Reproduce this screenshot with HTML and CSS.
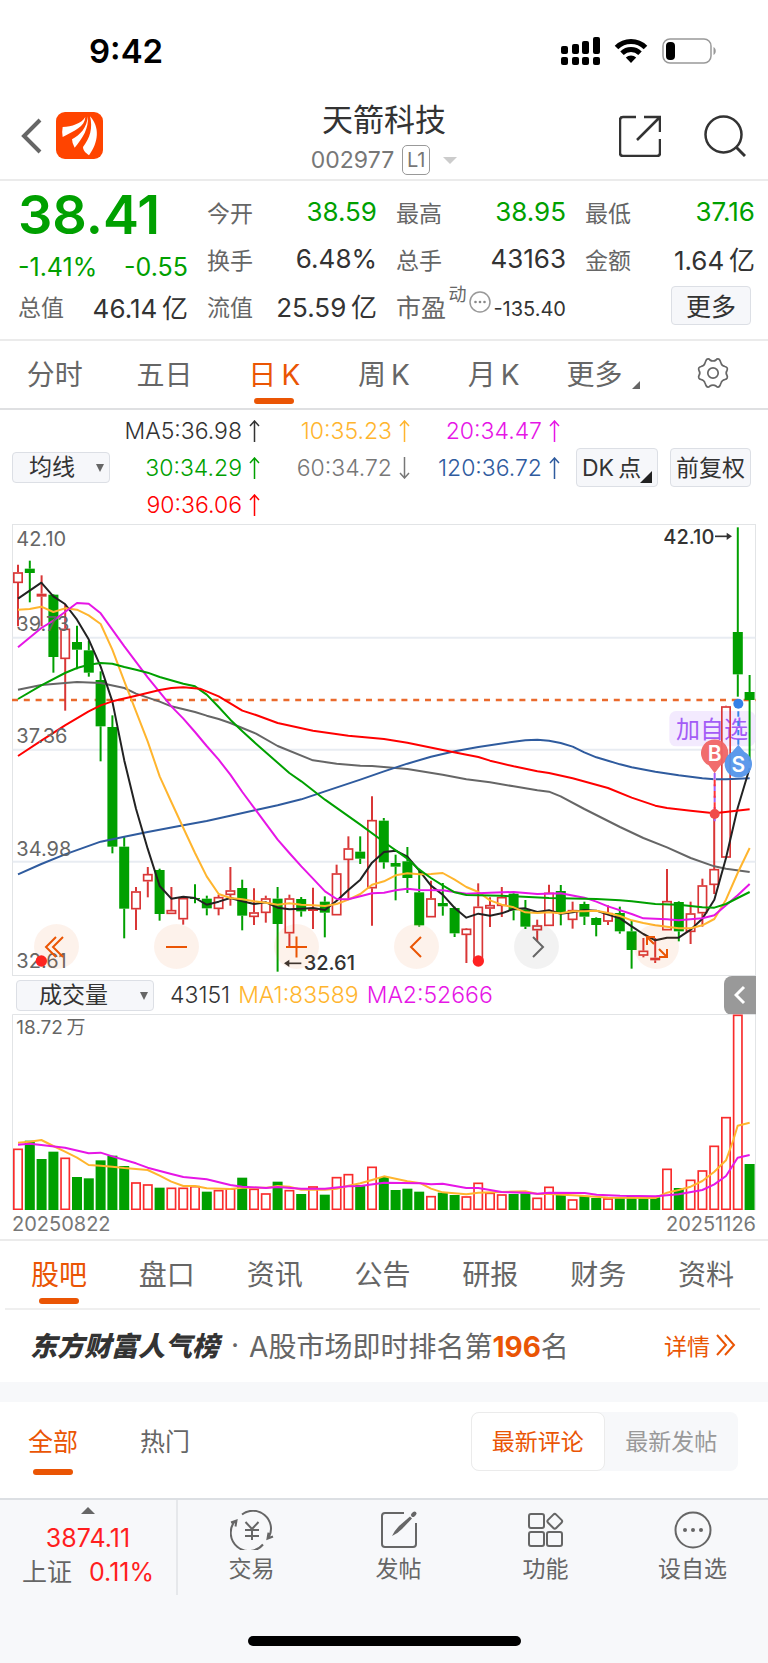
FILE: index.html
```html
<!doctype html>
<html lang="zh-CN">
<head>
  <meta charset="utf-8">
  <meta name="viewport" content="width=device-width, initial-scale=1">
  <title>天箭科技 002977</title>
  <link rel="stylesheet" href="styles.css">
</head>
<body>
  <div class="status">
    <span class="time">9:42</span>
    <div class="status-icons">
      <svg width="39" height="28" viewBox="0 0 39 28">
        <rect x="0" y="9" width="7" height="8" rx="2"/><rect x="11" y="7" width="7" height="10" rx="2"/>
        <rect x="21" y="4" width="7" height="13" rx="2"/><rect x="32" y="0" width="7" height="17" rx="2"/>
        <rect x="0" y="20" width="7" height="8" rx="2"/><rect x="11" y="20" width="7" height="8" rx="2"/>
        <rect x="21" y="20" width="7" height="8" rx="2"/><rect x="32" y="20" width="7" height="8" rx="2"/>
      </svg>
      <svg width="34" height="26" viewBox="0 0 34 26">
        <path d="M2.500 9.500a20.500 20.500 0 0 1 29 0M8 15.200a13 13 0 0 1 18 0" fill="none" stroke="#000" stroke-width="5"/>
        <path d="M11.800 19.500a7.500 7.500 0 0 1 10.400 0L17 25z"/>
      </svg>
      <svg width="55" height="26" viewBox="0 0 55 26">
        <rect x="1" y="1" width="48" height="24" rx="7" fill="none" stroke="#999" stroke-width="1.500"/>
        <rect x="4" y="4" width="9" height="18" rx="4"/>
        <path d="M51.500 9v8c3-1.500 3-6.500 0-8z" fill="#999"/>
      </svg>
    </div>
  </div>

  <header class="header">
    <div class="header-left">
      <button class="icon-btn" aria-label="返回">
        <svg width="22" height="36" viewBox="0 0 22 36"><path d="M20 2 4 18l16 16" fill="none" stroke="#666" stroke-width="4"/></svg>
      </button>
      <svg class="logo" width="47" height="47" viewBox="0 0 141 141">
        <rect width="141" height="141" rx="27" fill="#ff4400"/>
        <path d="M20 45c28-2 55-9 68-30-2 30-32 40-68 60q-3-16 0-30z" fill="#fff"/>
        <path d="M95 13c5 34-16 68-39 94q-8-14-8-25c24-12 46-36 47-69z" fill="#fff"/>
        <path d="M102 13c30 32 26 78-3 117-11-9-17-13-18-25 21-26 30-57 21-92z" fill="#fff"/>
      </svg>
    </div>
    <div class="header-title">
      <h1>天箭科技</h1>
      <button class="code">002977<span class="level">L1</span><i class="tri-down"></i></button>
    </div>
    <div class="header-right">
      <button class="icon-btn" aria-label="分享">
        <svg width="42" height="42" viewBox="0 0 42 42"><path d="M17 2H4q-3 0-3 3v33q0 3 3 3h34q3 0 3-3V24M25 2h16v15M41 2 18 25" fill="none" stroke="#333" stroke-width="2.500"/></svg>
      </button>
      <button class="icon-btn" aria-label="搜索">
        <svg width="42" height="42" viewBox="0 0 42 42"><circle cx="19.500" cy="19.500" r="18" fill="none" stroke="#333" stroke-width="2.500"/><path d="m32 32 9 9" stroke="#333" stroke-width="3"/></svg>
      </button>
    </div>
  </header>

  <section class="quote">
    <div class="quote-main">
      <div class="price">38.41</div>
      <div class="change"><span>-1.41%</span><span>-0.55</span></div>
      <div class="total"><label>总值</label><b>46.14&thinsp;亿</b></div>
    </div>
    <div>
      <div class="item"><label>今开</label><b class="down">38.59</b></div>
      <div class="item"><label>换手</label><b>6.48%</b></div>
      <div class="item"><label>流值</label><b>25.59&thinsp;亿</b></div>
    </div>
    <div>
      <div class="item"><label>最高</label><b class="down">38.95</b></div>
      <div class="item"><label>总手</label><b>43163</b></div>
      <div class="item pe">
        <label>市盈</label><sup>动</sup>
        <svg width="22" height="22" viewBox="0 0 22 22"><circle cx="11" cy="11" r="10" fill="none" stroke="#999" stroke-width="1.500"/><g fill="#888"><circle cx="6.500" cy="11" r="1.300"/><circle cx="11" cy="11" r="1.300"/><circle cx="15.500" cy="11" r="1.300"/></g></svg>
        <b>-135.40</b>
      </div>
    </div>
    <div>
      <div class="item"><label>最低</label><b class="down">37.16</b></div>
      <div class="item"><label>金额</label><b>1.64&thinsp;亿</b></div>
      <div class="item"><button class="box-btn more">更多</button></div>
    </div>
  </section>

  <nav class="tabs period">
    <button>分时</button>
    <button>五日</button>
    <button class="active">日&thinsp;K</button>
    <button>周&thinsp;K</button>
    <button>月&thinsp;K</button>
    <button>更多<i class="corner"></i></button>
    <button aria-label="设置">
      <svg width="32" height="32" viewBox="0 0 32 32" fill="none" stroke="#666" stroke-width="1.700" stroke-linejoin="round"><path d="M9 3.500c1-2 3-2 4-.5 1.500 1.300 4.500 1.300 6 0 1-1.500 3-1.500 4 .5l1.200 3c.4 1.600 2 2.500 3.800 3 2 .5 3 2 2 4-1 1.500-1 3.500 0 5 1 2 0 3.500-2 4-1.800.5-3.400 1.400-3.800 3l-1.200 3c-1 2-3 2-4 .5-1.500-1.300-4.500-1.300-6 0-1 1.500-3 1.500-4-.5l-1.200-3c-.4-1.600-2-2.500-3.800-3-2-.5-3-2-2-4 1-1.500 1-3.500 0-5-1-2 0-3.500 2-4 1.800-.5 3.400-1.400 3.800-3z"/><circle cx="16" cy="16" r="5.200"/></svg>
    </button>
  </nav>

  <svg class="defs" width="0" height="0">
    <symbol id="arrow" viewBox="0 0 11 22"><path d="M5.500 22V1M1 6l4.500-5L10 6" fill="none" stroke="currentColor" stroke-width="1.500"/></symbol>
  </svg>

  <section class="averages">
    <div class="picker">
      <select aria-label="主图指标"><option>均线</option></select>
    </div>
    <div class="ma-list">
      <span class="ma5">MA5:36.98<svg><use href="#arrow"/></svg></span>
      <span class="ma10">10:35.23<svg><use href="#arrow"/></svg></span>
      <span class="ma20">20:34.47<svg><use href="#arrow"/></svg></span>
      <span class="ma30">30:34.29<svg><use href="#arrow"/></svg></span>
      <span class="ma60">60:34.72<svg class="fall"><use href="#arrow"/></svg></span>
      <span class="ma120">120:36.72<svg><use href="#arrow"/></svg></span>
      <span class="ma90">90:36.06<svg><use href="#arrow"/></svg></span>
    </div>
    <button class="box-btn dk">DK&thinsp;点<i class="corner"></i></button>
    <button class="box-btn">前复权</button>
  </section>

  <section class="chart">
    <svg id="kline" viewBox="36 28 2232 1356"></svg>
    <div class="chart-tools">
      <button aria-label="最左"><svg viewBox="0 0 45 45"><path d="M22 13 12 23l10 10M29 13 19 23l10 10"/></svg></button>
      <button aria-label="缩小"><svg viewBox="0 0 45 45"><path d="M12 23h21"/></svg></button>
      <button aria-label="放大"><svg viewBox="0 0 45 45"><path d="M12 23h21M22.500 12.500v21"/></svg></button>
      <button aria-label="左移"><svg viewBox="0 0 45 45"><path d="M27 13 17 23l10 10"/></svg></button>
      <button class="disabled" aria-label="右移"><svg viewBox="0 0 45 45"><path d="m19 13 10 10-10 10"/></svg></button>
      <button aria-label="全屏"><svg viewBox="0 0 45 45"><path d="m13 13 7 7M13 21v-8h8M33 33l-8-8M33 25v8h-8"/></svg></button>
    </div>
  </section>

  <section class="volume">
    <div class="volume-head">
      <div class="picker wide">
        <select aria-label="副图指标"><option>成交量</option></select>
      </div>
      <span>43151</span>
      <span class="ma10">MA1:83589</span>
      <span class="ma20">MA2:52666</span>
      <button class="fold" aria-label="展开"><svg width="12" height="20" viewBox="0 0 12 20"><path d="m10 2-8 8 8 8" fill="none" stroke="#fff" stroke-width="3"/></svg></button>
    </div>
    <svg id="volume" viewBox="36 132 2232 588"></svg>
    <div class="dates"><span>20250822</span><span>20251126</span></div>
  </section>

  <nav class="tabs info">
    <button class="active">股吧</button>
    <button>盘口</button>
    <button>资讯</button>
    <button>公告</button>
    <button>研报</button>
    <button>财务</button>
    <button>资料</button>
  </nav>

  <section class="rank">
    <strong class="rank-name">东方财富人气榜</strong>
    <span class="dot">·</span>
    <span>A股市场即时排名第<b>196</b>名</span>
    <a href="#rank">详情<svg width="20" height="22" viewBox="0 0 20 22"><path d="m1 1 9 10-9 10M9 1l9 10-9 10" fill="none" stroke="#ea5504" stroke-width="2"/></svg></a>
  </section>

  <section class="filter">
    <button class="active">全部</button>
    <button>热门</button>
    <div class="segment">
      <button class="on">最新评论</button>
      <button>最新发帖</button>
    </div>
  </section>

  <footer class="bottom">
    <div class="bottom-row">
      <button class="index">
        <i class="tri-up"></i>
        <span class="up">3874.11</span>
        <span class="index-name">上证<span class="up">0.11%</span></span>
      </button>
      <button>
        <svg width="44" height="40" viewBox="0 0 44 40"><path d="M12 4.500A18 18 0 0 1 39 27M33 34.500A18 18 0 0 1 5 11M1 12.500l5.500-2-1 6M43 26.500l-5.500 2.200 1-6"/><path d="m15.500 12 6.500 7 6.500-7M15 20h14M15 26h14M22 19v11"/></svg>
        交易
      </button>
      <button>
        <svg width="44" height="40" viewBox="0 0 44 40"><path d="M27 3H8q-3 0-3 3v28q0 3 3 3h28q3 0 3-3V13"/><path d="M15 26q3-6 7-10L33 6.500l2 2L25 19q-5 5-10 7z" fill="#666" stroke="none"/><path d="m36 5 1.500-1.500" stroke-width="4" stroke-linecap="round"/></svg>
        发帖
      </button>
      <button>
        <svg width="44" height="40" viewBox="0 0 44 40"><rect x="5" y="4" width="15" height="14" rx="2"/><rect x="5" y="22" width="15" height="14" rx="2"/><rect x="23" y="22" width="15" height="14" rx="2"/><rect x="25" y="5.500" width="11.500" height="11.500" rx="2" transform="rotate(45 30.700 11.300)"/></svg>
        功能
      </button>
      <button>
        <svg width="44" height="40" viewBox="0 0 44 40"><circle cx="22" cy="20" r="17.500"/><g fill="#666" stroke="none"><circle cx="14" cy="20" r="2"/><circle cx="22" cy="20" r="2"/><circle cx="30" cy="20" r="2"/></g></svg>
        设自选
      </button>
    </div>
    <div class="home-bar"></div>
  </footer>

  <script src="chart.js"></script>
</body>
</html>
```
FILE: styles.css
```css
* {
  box-sizing: border-box;
}

body {
  margin: 0;
  background: #fff;
  color: #333;
  font-family: Inter, "Noto Sans CJK SC", sans-serif;
  font-size: 23px;
}

button,
select {
  padding: 0;
  border: 0;
  background: none;
  color: inherit;
  font: inherit;
}

svg {
  display: block;
}

/* status bar */
.status {
  display: flex;
  align-items: center;
  justify-content: space-between;
  height: 102px;
  padding: 0 51px 0 89px;
  color: #000;
}

.time {
  font-size: 33px;
  font-weight: 600;
}

.status-icons {
  display: flex;
  align-items: center;
  gap: 14px;
}

/* header */
.header {
  display: grid;
  grid-template-columns: 1fr auto 1fr;
  align-items: start;
  padding-bottom: 2px;
  border-bottom: 2px solid #ebebeb;
}

.header-left,
.header-right {
  display: flex;
  align-items: center;
  height: 67px;
}

.header-left {
  gap: 14px;
  padding-left: 20px;
}

.header-right {
  justify-content: flex-end;
  gap: 43px;
  padding-right: 22px;
}

.header-title {
  display: flex;
  flex-direction: column;
  align-items: center;
  gap: 6px;
}

h1 {
  margin: 0;
  font-size: 31px;
  font-weight: 400;
  line-height: 35px;
}

.code {
  display: flex;
  align-items: center;
  height: 34px;
  color: #777;
}

.level {
  width: 28px;
  margin: 0 13px 0 8px;
  border: 1px solid #999;
  border-radius: 5px;
  font-size: 20px;
  line-height: 28px;
}

.tri-down {
  border: 7px solid transparent;
  border-top-color: #ccc;
  border-bottom: 0;
}

/* quote */
.quote {
  display: grid;
  grid-template-columns: repeat(4, 1fr);
  gap: 19px;
  padding: 7px 13px 10px 18px;
  border-bottom: 2px solid #ebebeb;
}

.quote b {
  font-size: 26px;
  font-weight: 400;
}

.quote label {
  color: #666;
}

.price {
  color: #00a000;
  font-size: 54px;
  font-weight: 600;
  line-height: 54px;
}

.change,
.total,
.item {
  display: flex;
  align-items: center;
  justify-content: space-between;
  white-space: nowrap;
}

.change {
  height: 50px;
  color: #00a000;
  font-size: 25px;
}

.total {
  height: 28px;
}

.item {
  height: 47px;
}

.quote .down {
  color: #00a000;
}

.pe label {
  font-size: 25px;
}

.pe sup {
  align-self: flex-start;
  color: #666;
  font-size: 18px;
  line-height: 26px;
}

.pe svg {
  margin-bottom: 8px;
}

.quote .pe b {
  padding-top: 7px;
  font-size: 20px;
}

.box-btn {
  position: relative;
  height: 39px;
  padding: 0 5px 3px;
  border: 1px solid #dcdfe5;
  border-radius: 4px;
  background: #f6f7fa;
  white-space: nowrap;
}

.more {
  width: 80px;
  margin: 0 4px 0 auto;
  font-size: 25px;
}

/* tabs */
.tabs {
  display: grid;
  grid-template-columns: repeat(7, 1fr);
  height: 69px;
  color: #666;
  font-size: 28px;
}

.tabs button {
  position: relative;
  display: flex;
  align-items: center;
  justify-content: center;
  padding-bottom: 3px;
  white-space: nowrap;
}

.tabs .active,
.filter .active {
  color: #ea5504;
}

.tabs .active::after,
.filter .active::after {
  content: "";
  position: absolute;
  bottom: 4px;
  left: 50%;
  width: 40px;
  height: 6px;
  margin-left: -20px;
  border-radius: 3px;
  background: #ea5504;
}

.period {
  border-bottom: 2px solid #dfe0e2;
}

.info {
  margin: 0 8px 0 5px;
  border-bottom: 2px solid #efefef;
}

.corner {
  border: 4px solid #666;
  border-top-color: transparent;
  border-left-color: transparent;
}

.period .corner {
  align-self: flex-end;
  margin: 0 0 16px 10px;
}

/* moving averages */
.averages {
  display: flex;
  align-items: center;
  padding: 2px 17px 1px 12px;
}

.picker {
  position: relative;
  width: 98px;
}

.picker select {
  width: 100%;
  height: 31px;
  padding: 0 0 2px 16px;
  border: 1px solid #dcdfe5;
  border-radius: 4px;
  appearance: none;
  background: #f6f7fa;
}

.picker::after {
  content: "";
  position: absolute;
  top: 12px;
  right: 6px;
  border: 4px solid transparent;
  border-top: 8px solid #666;
  border-bottom: 0;
}

.ma-list {
  display: grid;
  grid-template-columns: repeat(3, 150px);
  grid-auto-rows: 37px;
  align-items: center;
  margin-right: auto;
}

.ma-list,
.volume-head > span {
  font-weight: 300;
}

.ma-list span {
  display: flex;
  align-items: center;
  justify-content: flex-end;
  gap: 7px;
}

.ma-list svg {
  width: 11px;
  height: 22px;
}

.ma-list .fall {
  transform: rotate(180deg);
}

.ma10 { color: #ffb52e; }
.ma20 { color: #e616e6; }
.ma30 { color: #00a000; }
.ma60 { color: #777; }
.ma90 { color: #f00; }
.ma120 { color: #2f5b9e; }

.averages .box-btn + .box-btn {
  margin-left: 12px;
}

.dk {
  width: 82px;
  text-align: left;
}

.dk .corner {
  position: absolute;
  right: 5px;
  bottom: 3px;
  border: 6px solid #222;
  border-top-color: transparent;
  border-left-color: transparent;
}

/* candle chart */
.chart {
  position: relative;
  margin: 0 12px;
}

.chart > svg,
.volume > svg {
  width: 100%;
  height: auto;
}

.chart-tools {
  position: absolute;
  bottom: 7px;
  left: 22px;
  display: flex;
  gap: 75px;
}

.chart-tools button {
  width: 45px;
  height: 45px;
  border-radius: 50%;
  background: rgba(234, 85, 4, 0.08);
}

.chart-tools path {
  fill: none;
  stroke: #ea5504;
  stroke-width: 2;
}

.chart-tools .disabled {
  background: rgba(0, 0, 0, 0.05);
}

.chart-tools .disabled path {
  stroke: #666;
}

/* volume chart */
.volume {
  padding: 0 12px;
  border-bottom: 2px solid #ebebeb;
}

.volume-head {
  display: flex;
  align-items: center;
  gap: 8px;
  height: 38px;
}

.wide {
  width: 138px;
  margin: 0 8px 0 4px;
}

.wide select {
  padding-left: 22px;
}

.fold {
  display: flex;
  align-items: center;
  justify-content: center;
  width: 32px;
  height: 39px;
  margin-left: auto;
  border-radius: 8px 0 0 8px;
  background: #999;
}

.dates {
  display: flex;
  justify-content: space-between;
  color: #777;
  font-size: 20px;
  line-height: 29px;
}

/* popularity rank */
.rank {
  display: flex;
  align-items: center;
  height: 92px;
  padding: 0 32px 3px 30px;
  border-bottom: 20px solid #f7f8fa;
  color: #666;
  font-size: 28px;
  white-space: nowrap;
}

.rank-name {
  color: #333;
  font-size: 27px;
  font-weight: 900;
  font-style: italic;
}

.dot {
  padding: 0 10px 0 12px;
}

.rank b {
  color: #ea5504;
  font-weight: 700;
}

.rank a {
  display: flex;
  align-items: center;
  gap: 6px;
  margin-left: auto;
  color: #ea5504;
  font-size: 23px;
  text-decoration: none;
}

/* comment filter */
.filter {
  display: flex;
  gap: 62px;
  height: 96px;
  padding: 10px 30px 0 28px;
  color: #666;
  font-size: 25px;
}

.filter > button {
  position: relative;
  height: 59px;
  padding-bottom: 3px;
}

.filter .active::after {
  bottom: -4px;
}

.segment {
  display: grid;
  grid-template-columns: 1fr 1fr;
  width: 267px;
  height: 59px;
  margin-left: auto;
  border-radius: 8px;
  background: #f7f8fa;
  color: #999;
  font-size: 23px;
}

.segment button {
  padding-bottom: 3px;
}

.segment .on {
  border: 1px solid #ebebeb;
  border-radius: 8px;
  background: #fff;
  color: #ea5504;
}

/* bottom bar */
.bottom {
  height: 165px;
  border-top: 2px solid #dcdfe3;
  background: #f7f8fa;
}

.bottom-row {
  display: grid;
  grid-template-columns: 178px repeat(4, 1fr);
  height: 95px;
  margin-right: 2px;
}

.bottom-row button {
  display: flex;
  flex-direction: column;
  align-items: center;
  padding-top: 10px;
  color: #666;
  line-height: 39px;
}

.bottom-row svg {
  fill: none;
  stroke: #666;
  stroke-width: 2;
}

.bottom-row .index {
  padding-top: 7px;
  border-right: 2px solid #e6e8eb;
  font-size: 25px;
  line-height: 34px;
}

.tri-up {
  margin-bottom: 7px;
  border: 7px solid transparent;
  border-top: 0;
  border-bottom-color: #666;
}

.up {
  color: #ff1e1e;
}

.index-name {
  display: flex;
  gap: 17px;
}

.home-bar {
  width: 273px;
  height: 10px;
  margin: 41px auto 0;
  border-radius: 5px;
  background: #000;
}
```
FILE: chart.js
```js
// Both charts share one x scale, drawn in thirds of a pixel.
var FIRST = 54;
var STEP = 35.4;
var RED = '#d93636';
var GREEN = '#00a000';

// direction, high, body top, body bottom, low
var candles = [
  ['r', 150, 173, 205, 335], ['g', 138, 162, 175, 263], ['r', 182, 237, 246, 335],
  ['g', 238, 240, 427, 474], ['r', 268, 342, 433, 588], ['g', 333, 382, 405, 464],
  ['g', 378, 407, 474, 486], ['g', 470, 496, 635, 740], ['g', 602, 637, 996, 1016],
  ['g', 966, 996, 1182, 1271], ['r', 1117, 1130, 1184, 1246], ['r', 1057, 1078, 1100, 1148],
  ['g', 1062, 1066, 1198, 1218], ['r', 1117, 1186, 1198, 1198], ['r', 1145, 1150, 1214, 1230],
  ['g', 1109, 1150, 1153, 1166], ['g', 1143, 1152, 1181, 1202], ['r', 1140, 1147, 1183, 1202],
  ['r', 1057, 1127, 1141, 1173], ['g', 1095, 1120, 1203, 1247], ['r', 1121, 1193, 1207, 1231],
  ['r', 1143, 1151, 1195, 1224], ['g', 1117, 1152, 1228, 1371], ['r', 1140, 1151, 1256, 1300],
  ['g', 1147, 1153, 1190, 1206], ['r', 1119, 1181, 1189, 1243], ['g', 1145, 1161, 1194, 1268],
  ['r', 1050, 1076, 1202, 1202], ['r', 965, 1001, 1036, 1152], ['g', 965, 1011, 1032, 1048],
  ['r', 845, 916, 1121, 1233], ['g', 910, 918, 1043, 1062], ['g', 1020, 1045, 1056, 1157],
  ['g', 997, 1040, 1090, 1135], ['g', 1062, 1133, 1232, 1236], ['r', 1098, 1151, 1208, 1208],
  ['g', 1105, 1165, 1175, 1203], ['g', 1176, 1180, 1256, 1267], ['r', 1240, 1242, 1261, 1345],
  ['r', 1106, 1176, 1335, 1340], ['r', 1148, 1171, 1182, 1237], ['r', 1117, 1147, 1174, 1207],
  ['g', 1133, 1137, 1187, 1217], ['g', 1156, 1184, 1236, 1243], ['r', 1215, 1232, 1247, 1280],
  ['r', 1110, 1134, 1234, 1234], ['g', 1111, 1129, 1192, 1232], ['r', 1161, 1186, 1216, 1242],
  ['g', 1161, 1168, 1206, 1231], ['g', 1208, 1210, 1231, 1265], ['r', 1172, 1195, 1221, 1231],
  ['g', 1176, 1195, 1250, 1257], ['g', 1217, 1250, 1306, 1362], ['r', 1270, 1308, 1323, 1328],
  ['r', 1270, 1329, 1337, 1345], ['r', 1063, 1159, 1247, 1247], ['g', 1160, 1162, 1250, 1280],
  ['r', 1161, 1196, 1252, 1288], ['r', 1092, 1112, 1196, 1236], ['r', 900, 1063, 1111, 1138],
  ['r', 573, 575, 1029, 1029], ['g', 38, 352, 479, 546], ['g', 481, 532, 556, 740]
];

// direction + top of each bar
var bars = ('r536 g512 g567 g545 r563 g621 g625 g571 g557 g588 r637 r643 g653 r653 r653 r648 ' +
  'g665 r660 r655 g623 r656 r670 g635 r660 g672 r649 g674 r621 r612 g645 r590 g621 g660 g656 ' +
  'g665 r678 g668 g675 r679 r638 r668 r673 g672 g670 r683 r650 g674 r688 g678 g684 r685 g682 ' +
  'g675 g682 g682 r596 g654 r629 r601 r527 r441 r134 g582').split(' ');

var averages = {
  '#666666': '54,525 124,511 195,505 231,502 302,505 373,520 408,537 479,561 514,575 585,592 620,603 656,613 691,625 727,640 768,657 833,694 939,737 1010,747 1081,753 1116,754 1222,763 1328,780 1399,794 1470,803 1541,815 1612,827 1647,831 1682,845 1753,883 1860,937 1930,970 2001,998 2072,1030 2143,1055 2178,1062 2249,1072',
  '#2f5b9e': '54,1079 124,1048 195,1019 302,981 373,966 443,952 550,932 620,919 691,903 768,886 833,872 904,854 975,830 1081,795 1152,770 1222,747 1293,726 1364,710 1435,697 1541,681 1576,677 1612,675 1647,678 1682,685 1718,696 1753,713 1789,728 1824,738 1860,749 1895,758 1966,771 2036,782 2107,791 2143,794 2178,794 2249,791',
  '#222222': '54,252 89,228 124,204 160,245 195,268 231,315 266,374 302,456 337,560 373,738 408,882 443,1002 479,1114 514,1152 550,1146 585,1150 620,1170 656,1161 691,1150 727,1160 762,1168 798,1163 833,1179 868,1184 904,1182 939,1180 975,1186 1010,1158 1045,1126 1081,1095 1116,1044 1152,1012 1187,1008 1222,1026 1258,1068 1293,1113 1328,1140 1364,1180 1399,1209 1435,1197 1470,1203 1505,1196 1541,1183 1576,1181 1612,1192 1647,1187 1682,1197 1718,1193 1753,1186 1789,1188 1824,1200 1860,1211 1895,1235 1930,1258 1966,1277 2001,1269 2036,1269 2072,1245 2107,1212 2143,1155 2178,1030 2213,880 2249,760',
  '#ffb52e': '54,285 89,283 124,276 160,292 195,281 231,285 266,302 302,328 337,405 373,500 408,590 443,680 479,785 514,862 550,940 585,1015 620,1085 656,1138 691,1150 727,1154 762,1160 798,1164 833,1170 868,1166 904,1170 939,1172 975,1174 1010,1168 1045,1155 1081,1138 1116,1110 1152,1100 1187,1082 1222,1076 1258,1079 1293,1078 1328,1075 1364,1095 1399,1117 1435,1132 1470,1157 1505,1170 1541,1178 1576,1193 1612,1195 1647,1193 1682,1196 1718,1190 1753,1190 1789,1188 1824,1195 1860,1204 1895,1217 1930,1225 1966,1232 2001,1236 2036,1241 2072,1241 2107,1232 2143,1213 2178,1155 2213,1075 2249,1000',
  '#e616e6': '54,398 124,340 160,318 195,292 231,265 266,267 302,296 373,395 443,488 514,575 550,612 585,652 620,694 656,735 691,780 727,832 768,887 833,975 868,1015 904,1055 939,1092 975,1130 1010,1153 1045,1154 1081,1145 1116,1136 1152,1134 1187,1127 1222,1122 1258,1126 1328,1127 1399,1137 1470,1134 1541,1132 1612,1138 1682,1136 1753,1149 1789,1161 1824,1175 1895,1198 1930,1211 2001,1214 2036,1217 2107,1211 2143,1202 2178,1172 2213,1142 2249,1108',
  '#00a000': '54,553 124,512 195,475 231,460 266,450 302,445 337,447 373,457 408,465 443,474 479,487 550,507 585,515 620,540 656,577 691,615 727,650 768,687 868,775 904,800 975,855 1081,930 1152,982 1222,1032 1258,1065 1293,1090 1328,1112 1364,1133 1399,1141 1505,1143 1541,1145 1647,1150 1789,1153 1860,1157 1895,1160 1966,1168 2036,1170 2107,1178 2143,1179 2178,1168 2213,1150 2249,1132',
  '#ff0000': '54,724 124,678 195,632 266,590 302,572 337,560 408,543 479,526 514,520 550,518 600,522 656,545 727,588 768,601 833,625 939,648 1045,663 1152,673 1222,684 1328,706 1400,720 1435,727 1470,738 1541,755 1612,770 1647,775 1718,791 1824,820 1895,849 1966,873 2001,880 2072,888 2143,896 2249,884'
};

var volumeAverages = {
  '#ffb52e': '54,518 89,515 124,510 160,528 195,545 231,563 266,585 302,587 337,590 373,594 443,600 479,617 514,635 550,648 585,648 620,655 691,657 727,653 800,653 833,648 868,650 904,659 975,659 1010,656 1045,647 1081,640 1116,630 1152,619 1222,634 1262,640 1293,656 1328,667 1399,673 1435,668 1505,666 1576,664 1612,672 1647,672 1718,676 1789,680 1824,683 1966,684 2001,668 2036,660 2072,650 2107,633 2143,605 2178,571 2200,510 2213,467 2249,458',
  '#e616e6': '54,524 89,521 124,525 195,533 266,550 302,548 337,559 408,580 443,593 514,612 550,621 620,628 691,645 727,650 798,654 833,651 904,656 975,656 1045,649 1081,648 1152,638 1262,640 1293,643 1328,641 1399,654 1435,654 1505,666 1576,668 1612,671 1647,668 1754,669 1790,674 1860,677 1966,679 2001,676 2036,673 2107,660 2143,643 2178,618 2213,563 2249,555'
};

function rect(x, y, w, h, fill, extra) {
  return '<rect x="' + x + '" y="' + y + '" width="' + w + '" height="' + h + '" fill="' + fill + '" ' + (extra || '') + '/>';
}

function line(x1, y1, x2, y2, color, width, dash) {
  return '<path d="M' + x1 + ' ' + y1 + 'L' + x2 + ' ' + y2 + '" stroke="' + color + '" stroke-width="' + width + '"' +
    (dash ? ' stroke-dasharray="' + dash + '"' : '') + '/>';
}

function text(x, y, size, color, value, extra) {
  return '<text x="' + x + '" y="' + y + '" font-size="' + size + '" fill="' + color + '" ' + (extra || '') + '>' + value + '</text>';
}

function dot(x, y, r, color) {
  return '<circle cx="' + x + '" cy="' + y + '" r="' + r + '" fill="' + color + '"/>';
}

function lines(set) {
  return Object.keys(set).map(function (color) {
    return '<polyline points="' + set[color] + '" fill="none" stroke="' + color + '" stroke-width="6" stroke-linejoin="round"/>';
  }).join('');
}

function body(x, top, bottom, up, color) {
  if (up && bottom - top > 10) {
    return rect(x - 12.5, top + 2, 25, bottom - top - 4, 'none', 'stroke="' + color + '" stroke-width="5"');
  }
  return rect(x - 15, top, 30, bottom - top, color);
}

function drawKline() {
  var out = rect(37.5, 29.5, 2229, 1353, 'none', 'stroke="#e2e4e6" stroke-width="3"');
  [369, 705, 1041].forEach(function (y) {
    out += line(38, y, 2266, y, '#e8ecf2', 6);
  });

  out += rect(2008, 589, 258, 106, '#f3eafe', 'rx="20"');
  out += text(2028, 671, 72, '#a45cf6', '加自选');
  out += line(36, 556, 2268, 556, '#ea6a2c', 7, '18 17.4');

  candles.forEach(function (c, i) {
    var x = FIRST + STEP * i;
    var up = c[0] === 'r';
    var color = up ? RED : GREEN;
    out += line(x, c[1], x, c[2], color, 6) + line(x, c[3], x, c[4], color, 6);
    out += body(x, c[2], c[3], up, color);
  });
  out += lines(averages);

  [[93, '42.10'], [349, '39.73'], [685, '37.36'], [1023, '34.98'], [1361, '32.61']].forEach(function (l) {
    out += text(49, l[0], 60, '#666', l[1]);
  });

  out += text(1990, 87, 60, '#333', '42.10', 'font-weight="500"');
  out += line(2145, 65, 2185, 65, '#333', 5) + '<path d="M2180 54l16 11-16 11z" fill="#333"/>';
  out += text(911, 1367, 60, '#333', '32.61', 'font-weight="500"');
  out += line(865, 1346, 904, 1346, '#333', 5) + '<path d="M868 1335l-16 11 16 11z" fill="#333"/>';
  out += dot(124, 1339, 17, '#f22') + dot(1435, 1339, 17, '#f22');

  // buy and sell pins
  out += line(2144, 775, 2144, 895, '#fff', 7);
  out += line(2144, 775, 2144, 920, '#a45cf6', 6, '20 14') + line(2144, 795, 2144, 885, '#f33', 6, '20 14');
  out += dot(2144, 898, 15, '#f04a4a');
  out += '<path d="M2144 776l-18-24a41 41 0 1 1 36 0z" fill="#f06565" fill-opacity=".95"/>';
  out += text(2144, 740, 63, '#fff', 'B', 'font-weight="600" text-anchor="middle"');
  out += line(2215, 590, 2215, 695, '#3a85e8', 6, '16 12') + dot(2215, 567, 15, '#3580e6');
  out += '<path d="M2215 690l-18 21a41 41 0 1 0 36 0z" fill="#5495ea" fill-opacity=".95"/>';
  out += text(2215, 771, 63, '#fff', 'S', 'font-weight="600" text-anchor="middle"');
  document.getElementById('kline').innerHTML = out;
}

function drawVolume() {
  var out = '<path d="M37.500 720V133.500H2266.500V720z" fill="none" stroke="#e2e4e6" stroke-width="3"/>';
  bars.forEach(function (b, i) {
    var up = b[0] === 'r';
    out += body(FIRST + STEP * i, +b.slice(1), 720, up, up ? '#f92c2c' : GREEN);
  });
  out += lines(volumeAverages);
  out += text(49, 191, 57, '#666', '18.72&#8201;万');
  document.getElementById('volume').innerHTML = out;
}

drawKline();
drawVolume();
```
